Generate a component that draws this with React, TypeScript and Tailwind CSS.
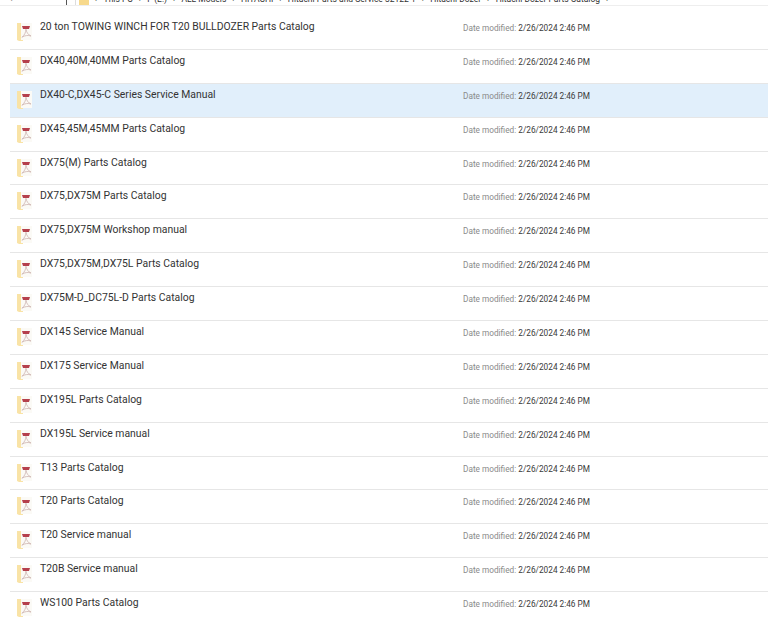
const files = [
  '20 ton TOWING WINCH FOR T20 BULLDOZER Parts Catalog',
  'DX40,40M,40MM Parts Catalog',
  'DX40-C,DX45-C Series Service Manual',
  'DX45,45M,45MM Parts Catalog',
  'DX75(M) Parts Catalog',
  'DX75,DX75M Parts Catalog',
  'DX75,DX75M Workshop manual',
  'DX75,DX75M,DX75L Parts Catalog',
  'DX75M-D_DC75L-D Parts Catalog',
  'DX145 Service Manual',
  'DX175 Service Manual',
  'DX195L Parts Catalog',
  'DX195L Service manual',
  'T13 Parts Catalog',
  'T20 Parts Catalog',
  'T20 Service manual',
  'T20B Service manual',
  'WS100 Parts Catalog',
];

const crumbs = [
  'This PC',
  'F (E:)',
  'ALL Models',
  'HITACHI',
  'Hitachi Parts and Service 32122 1',
  'Hitachi Dozer',
  'Hitachi Dozer Parts Catalog',
];

function PdfIcon() {
  return (
    <svg width="18" height="22" viewBox="0 0 18 22" className="shrink-0">
      <path d="M2 2h6v18H4l-2-1z" fill="#f9e3a6" />
      <path d="M6 2h11v17H6z" fill="#fbfaf6" />
      <path d="M7 5h8l-1 3H8z" fill="#b5404c" />
      <path d="M11 8c0 3-1.500 6-4 8.500M11 8.500c.5 3 2.500 5.500 5 6.500M7 16c3-1.500 6-2 9-1" fill="none" stroke="#cdb2ae" strokeWidth="0.8" />
    </svg>
  );
}

function FileRow({ name, selected, last }: { name: string; selected: boolean; last: boolean }) {
  return (
    <div
      className={`ml-[10px] flex h-[33.9px] items-start border-b ${
        last ? 'border-transparent' : 'border-[#e6e6e6]'
      } ${selected ? 'bg-[#e1effb]' : 'bg-white'}`}
    >
      <div className="mt-[5px] ml-[5px] w-[25px]">
        <PdfIcon />
      </div>
      <div className="mt-[2px] w-[423px] text-[10.4px] leading-[18px] text-[#333333]">{name}</div>
      <div className="mt-[3px] text-[8.250px] leading-[18px] text-[#8a8a8a]">
        Date modified: <span className="text-[#3a3a3a]">2/26/2024 2:46 PM</span>
      </div>
    </div>
  );
}

export default function App() {
  return (
    <div className="h-[631px] w-[768px] overflow-hidden bg-white font-['Roboto',sans-serif]">
      {/* clipped breadcrumb bar */}
      <div className="flex h-[6px] items-end overflow-hidden border-b border-[#eeeeee] text-[8.500px] leading-[12px] text-[#333333]">
        <div className="flex w-[75px] shrink-0 items-end pl-[10px] text-[#666666]">
          <span className="w-[56px]">‹</span>
          <span className="h-[5px] w-px bg-[#555555]" />
        </div>
        <div className="flex h-[6px] items-end gap-[6px] border-l border-[#dddddd] pl-[3px] whitespace-nowrap">
          <span className="h-[5px] w-[10px] bg-[#f7d98c]" />
          <span>›</span>
          {crumbs.map((crumb) => (
            <span key={crumb} className="flex gap-[6px]">
              <span>{crumb}</span>
              <span>›</span>
            </span>
          ))}
        </div>
      </div>
      <div className="h-[10px]" />
      {files.map((name, i) => (
        <FileRow key={name} name={name} selected={i === 2} last={i === files.length - 1} />
      ))}
    </div>
  );
}
